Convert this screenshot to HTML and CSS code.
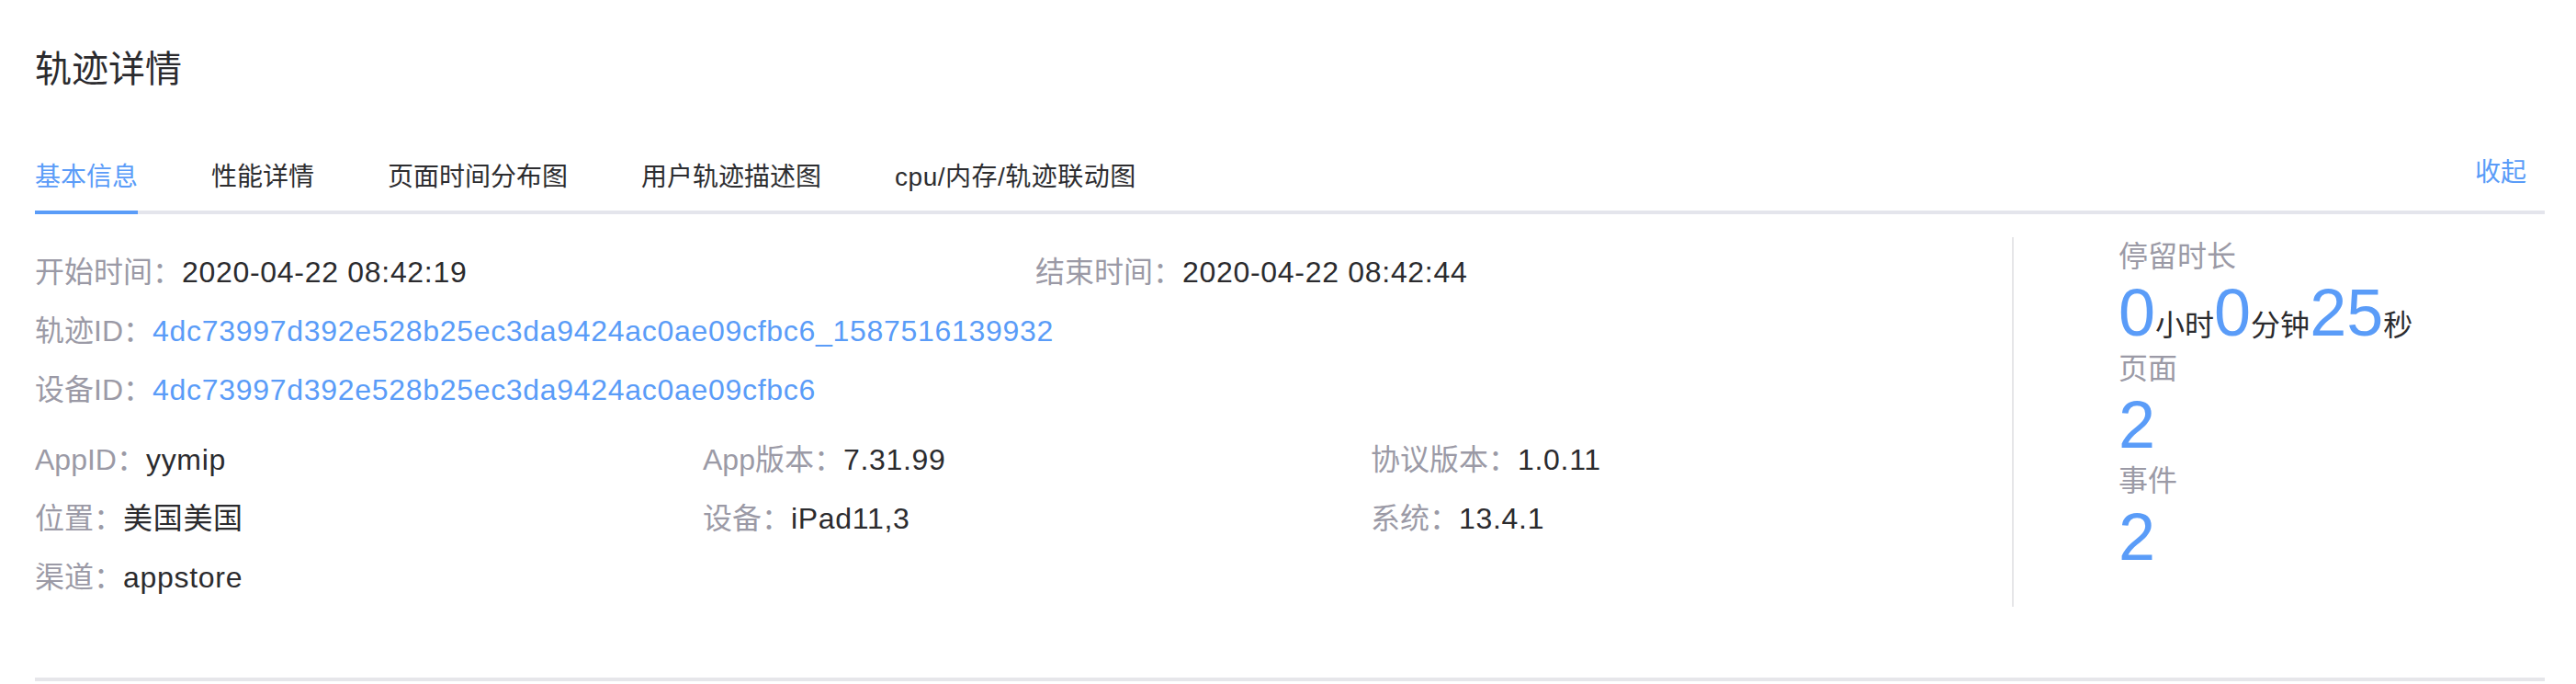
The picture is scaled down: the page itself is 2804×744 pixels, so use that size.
FILE: index.html
```html
<!DOCTYPE html>
<html lang="zh-CN">
<head>
<meta charset="utf-8">
<title>轨迹详情</title>
<link rel="stylesheet" href="styles.css">
</head>
<body>
<div class="page">
  <h1 class="title">轨迹详情</h1>
  <div class="tabs">
    <div class="tab active">基本信息</div>
    <div class="tab">性能详情</div>
    <div class="tab">页面时间分布图</div>
    <div class="tab">用户轨迹描述图</div>
    <div class="tab tab-mixed">cpu/内存/轨迹联动图</div>
    <a class="collapse">收起</a>
  </div>
  <div class="info">
    <div class="left">
      <div class="grid two">
        <div class="item"><span class="label">开始时间：</span><span class="value">2020-04-22 08:42:19</span></div>
        <div class="item"><span class="label">结束时间：</span><span class="value">2020-04-22 08:42:44</span></div>
      </div>
      <div class="item"><span class="label">轨迹ID：</span><span class="value link">4dc73997d392e528b25ec3da9424ac0ae09cfbc6_1587516139932</span></div>
      <div class="item"><span class="label">设备ID：</span><span class="value link">4dc73997d392e528b25ec3da9424ac0ae09cfbc6</span></div>
      <div class="grid three">
        <div class="item"><span class="label">AppID：</span><span class="value">yymip</span></div>
        <div class="item"><span class="label">App版本：</span><span class="value">7.31.99</span></div>
        <div class="item"><span class="label">协议版本：</span><span class="value">1.0.11</span></div>
        <div class="item"><span class="label">位置：</span><span class="value">美国美国</span></div>
        <div class="item"><span class="label">设备：</span><span class="value">iPad11,3</span></div>
        <div class="item"><span class="label">系统：</span><span class="value">13.4.1</span></div>
        <div class="item"><span class="label">渠道：</span><span class="value">appstore</span></div>
      </div>
    </div>
    <div class="right">
      <div class="stat-label">停留时长</div>
      <div class="stat-value"><span class="num">0</span><span class="unit">小时</span><span class="num">0</span><span class="unit">分钟</span><span class="num">25</span><span class="unit">秒</span></div>
      <div class="stat-label">页面</div>
      <div class="stat-value"><span class="num">2</span></div>
      <div class="stat-label">事件</div>
      <div class="stat-value"><span class="num">2</span></div>
    </div>
  </div>
</div>
</body>
</html>
```

FILE: styles.css
```css
html, body {
  margin: 0;
  padding: 0;
  background: #ffffff;
}

body {
  font-family: "Liberation Sans", "Noto Sans CJK SC", sans-serif;
  color: #2d2d30;
}

.page {
  width: 2732px;
  padding: 47px 0 0 38px;
}

.title {
  margin: 0;
  height: 56px;
  font-size: 40px;
  line-height: 56px;
  font-weight: normal;
  color: #2b2b2e;
}

.tabs {
  margin-top: 50px;
  height: 80px;
  display: flex;
  box-shadow: inset 0 -4px 0 #e4e5ec;
}

.tab {
  position: relative;
  height: 80px;
  line-height: 80px;
  font-size: 28px;
  padding: 0 40px;
  color: #2d2d30;
  white-space: nowrap;
}

.tab:first-child {
  padding-left: 0;
}

.tab-mixed {
  letter-spacing: 0.5px;
}

.tab.active {
  color: #5a9cf8;
}

.tab.active::after {
  content: "";
  position: absolute;
  left: 0;
  right: 40px;
  bottom: 0;
  height: 4px;
  background: #5a9cf8;
}

.collapse {
  margin-left: auto;
  margin-right: 20px;
  line-height: 70px;
  height: 70px;
  font-size: 28px;
  color: #5a9cf8;
}

.info {
  margin-top: 25px;
  display: flex;
  padding-bottom: 77px;
  border-bottom: 4px solid #e6e6ea;
}

.left {
  width: 2152px;
  padding-top: 6px;
}

.item {
  height: 64px;
  font-size: 32px;
  line-height: 64px;
  white-space: nowrap;
}

.label {
  color: #9b9aa6;
}

.value {
  color: #2b2b2e;
  letter-spacing: 0.7px;
}

.value.link {
  color: #5a9cf8;
}

.grid {
  display: grid;
}

.grid.two {
  grid-template-columns: 1089px 1fr;
}

.grid.three {
  margin-top: 12px;
  grid-template-columns: 727px 727px 1fr;
}

.right {
  flex: 1;
  border-left: 2px solid #e6e6e8;
  padding-left: 114px;
}

.stat-label {
  height: 42px;
  font-size: 32px;
  line-height: 42px;
  color: #9b9aa6;
}

.stat-value {
  line-height: 80px;
  height: 80px;
  white-space: nowrap;
}

.num {
  font-size: 72px;
  color: #5a9cf8;
}

.unit {
  font-size: 32px;
  color: #2b2b2e;
}
```
